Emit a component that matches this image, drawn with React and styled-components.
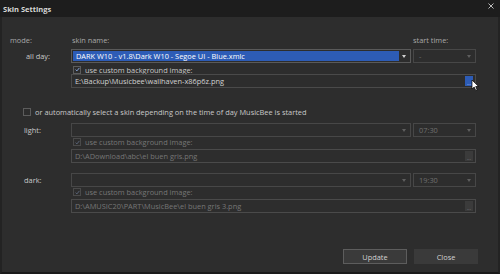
import React from 'react'
import styled, { createGlobalStyle } from 'styled-components'

const Global = createGlobalStyle`
  html, body { margin: 0; padding: 0; background: #1a1a1a; }
  body { font-family: "Open Sans", "Noto Sans", sans-serif; }
`

const Window = styled.div`
  width: 500px;
  height: 274px;
  display: flex;
  flex-direction: column;
  background: #1c1c1c;
  position: relative;
  overflow: hidden;
`
const TitleBar = styled.div`
  height: 17px;
  display: flex;
  align-items: center;
  justify-content: space-between;
  padding: 0 6px 0 3px;
  background: #1d1d1d;
  color: #d6d6d6;
  font-size: 7.5px;
  font-weight: 700;
`
const CloseX = styled.svg`
  width: 6px;
  height: 6px;
  margin-top: -5px;
`
const Body = styled.div`
  flex: 1;
  background: #2d2d2d;
  border-left: 2px solid #232323;
  border-right: 2px solid #232323;
  border-bottom: 2px solid #1a1a1a;
  padding-top: 19px;
  display: flex;
  flex-direction: column;
  color: #c9c9c9;
  font-size: 7.4px;
`
const Row = styled.div`
  display: grid;
  grid-template-columns: 67px 340px 63px;
  column-gap: 2px;
  align-items: center;
  height: ${p => p.h || 14}px;
  margin-top: ${p => p.mt || 0}px;
`
const Label = styled.div`
  line-height: 9px;
  color: ${p => (p.dim ? '#a8a8a8' : '#c9c9c9')};
  text-align: ${p => (p.right ? 'right' : 'left')};
  padding-left: ${p => p.pl || 0}px;
  padding-right: ${p => p.pr || 0}px;
  white-space: nowrap;
`
const Select = styled.div`
  height: 14px;
  box-sizing: border-box;
  border: 1px solid ${p => (p.active ? '#5a5a5a' : '#474747')};
  display: flex;
  align-items: stretch;
  padding: 1px;
`
const SelectValue = styled.div`
  flex: 1;
  background: ${p => (p.active ? '#2d5cb6' : 'transparent')};
  color: ${p => (p.active ? '#ffffff' : '#6f6f6f')};
  padding-left: ${p => (p.active ? 3 : 4)}px;
  display: flex;
  align-items: center;
  white-space: nowrap;
`
const Arrow = styled.div`
  width: 10px;
  display: flex;
  align-items: center;
  justify-content: center;
  &::after {
    content: '';
    border-left: 2.5px solid transparent;
    border-right: 2.5px solid transparent;
    border-top: 3.5px solid ${p => (p.active ? '#d0d0d0' : '#5e5e5e')};
  }
`
const CheckLine = styled.div`
  grid-column: 2 / 4;
  display: flex;
  align-items: center;
  gap: 4px;
  padding-left: 2px;
  color: ${p => (p.dim ? '#777777' : '#c9c9c9')};
  line-height: 8px;
`
const Box = styled.div`
  width: 6px;
  height: 6px;
  border: 1px solid ${p => (p.dim ? '#4a4a4a' : '#5c5c5c')};
  display: flex;
  align-items: center;
  justify-content: center;
  flex-shrink: 0;
`
const PathField = styled.div`
  grid-column: 2 / 4;
  height: 14px;
  box-sizing: border-box;
  border: 1px solid #4a4a4a;
  display: flex;
  align-items: center;
  padding: 1px 1px 1px 3px;
  color: ${p => (p.dim ? '#767676' : '#d2d2d2')};
  white-space: nowrap;
`
const PathText = styled.div`
  flex: 1;
`
const Browse = styled.div`
  width: 8px;
  height: 10px;
  margin-right: 1px;
  background: ${p => (p.active ? '#2d5cb6' : '#3b3b3b')};
  color: ${p => (p.active ? '#c8d4f0' : '#8a8a8a')};
  font-size: 5px;
  line-height: 5px;
  display: flex;
  align-items: flex-end;
  justify-content: center;
`
const AutoLine = styled.div`
  display: flex;
  align-items: center;
  gap: 4px;
  margin-top: 20px;
  height: 8px;
  padding-left: 21px;
  white-space: nowrap;
`
const Footer = styled.div`
  display: flex;
  justify-content: flex-end;
  gap: 7px;
  margin-top: auto;
  margin-bottom: 8px;
  padding-right: 20px;
`
const Button = styled.div`
  width: 64px;
  height: 15px;
  box-sizing: border-box;
  background: #3a3a3a;
  border: 1px solid ${p => (p.primary ? '#5d5d5d' : '#3a3a3a')};
  color: #d2d2d2;
  display: flex;
  align-items: center;
  justify-content: center;
  font-size: 7.4px;
`
const Cursor = styled.svg`
  position: absolute;
  left: 471px;
  top: 79px;
  width: 9px;
  height: 13px;
`

const Check = ({ dim }) => (
  <svg width="5" height="5" viewBox="0 0 5 5">
    <polyline points="0.6,2.6 1.9,3.9 4.4,0.9" fill="none" stroke={dim ? '#5d6a80' : '#8fb0ea'} strokeWidth="0.9" />
  </svg>
)

const TimeSelect = ({ value }) => (
  <Select>
    <SelectValue>{value}</SelectValue>
    <Arrow />
  </Select>
)

const Section = ({ label, time, path, mt }) => (
  <>
    <Row mt={mt}>
      <Label pl={22}>{label}</Label>
      <Select>
        <SelectValue />
        <Arrow />
      </Select>
      <TimeSelect value={time} />
    </Row>
    <Row h={8} mt={1}>
      <div />
      <CheckLine dim>
        <Box dim><Check dim /></Box>
        use custom background image:
      </CheckLine>
    </Row>
    <Row mt={3}>
      <div />
      <PathField dim>
        <PathText>{path}</PathText>
        <Browse>...</Browse>
      </PathField>
    </Row>
  </>
)

export default function App() {
  return (
    <Window>
      <Global />
      <TitleBar>
        Skin Settings
        <CloseX viewBox="0 0 6 6">
          <path d="M0.5 0.5 L5.5 5.5 M5.5 0.5 L0.5 5.5" stroke="#bdbdbd" strokeWidth="1" />
        </CloseX>
      </TitleBar>
      <Body>
        <Row h={9}>
          <Label dim pl={8}>mode:</Label>
          <Label dim pl={1}>skin name:</Label>
          <Label dim>start time:</Label>
        </Row>
        <Row mt={4}>
          <Label right pr={19}>all day:</Label>
          <Select active>
            <SelectValue active>DARK W10 - v1.8\Dark W10 - Segoe UI - Blue.xmlc</SelectValue>
            <Arrow active />
          </Select>
          <TimeSelect value="-" />
        </Row>
        <Row h={9} mt={2}>
          <div />
          <CheckLine>
            <Box><Check /></Box>
            use custom background image:
          </CheckLine>
        </Row>
        <Row>
          <div />
          <PathField>
            <PathText>E:\Backup\Musicbee\wallhaven-x86p6z.png</PathText>
            <Browse active>...</Browse>
          </PathField>
        </Row>
        <AutoLine>
          <Box />
          or automatically select a skin depending on the time of day MusicBee is started
        </AutoLine>
        <Section label="light:" time="07:30" path="D:\ADownload\abc\el buen gris.png" mt={7} />
        <Section label="dark:" time="19:30" path="D:\AMUSIC20\PART\MusicBee\el buen gris 3.png" mt={10} />
        <Footer>
          <Button primary>Update</Button>
          <Button>Close</Button>
        </Footer>
      </Body>
      <Cursor viewBox="0 0 9 13">
        <path d="M1 1 L1 10 L3.2 8 L4.8 11.6 L6.2 11 L4.7 7.5 L7.6 7.5 Z" fill="#ffffff" stroke="#000000" strokeWidth="0.7" />
      </Cursor>
    </Window>
  )
}
